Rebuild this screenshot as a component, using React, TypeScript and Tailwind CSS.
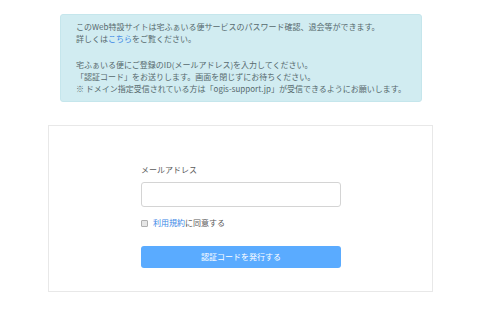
export default function App() {
  const font = { fontFamily: '"Noto Sans CJK JP", "Noto Sans", sans-serif' };
  return (
    <div className="w-[480px] h-[315px] bg-white overflow-hidden" style={font}>
      <div className="pt-[14px] pl-[60px]">
        <div className="w-[362px] h-[88px] bg-[#d1ecf1] border border-[#c5e6ec] rounded-[3px] pl-[15px] pt-[6px] text-[8px] leading-[12px] text-[#56696d]">
          <p>このWeb特設サイトは宅ふぁいる便サービスのパスワード確認、退会等ができます。</p>
          <p>
            詳しくは<span className="text-[#3a86e6]">こちら</span>をご覧ください。
          </p>
          <p className="mt-[14px]">宅ふぁいる便にご登録のID(メールアドレス)を入力してください。</p>
          <p>「認証コード」をお送りします。画面を閉じずにお待ちください。</p>
          <p>
            <span className="text-[#56696d]">※</span> ドメイン指定受信されている方は「ogis-support.jp」が受信できるようにお願いします。
          </p>
        </div>
      </div>
      <div className="mt-[23px] ml-[48px] w-[385px] h-[167px] border border-[#e8e8e8] pl-[92px] pt-[38px]">
        <div className="w-[200px] flex flex-col">
          <label className="text-[8px] leading-[12px] text-[#5a5a5a]">メールアドレス</label>
          <div className="mt-[6px] h-[25px] border border-[#d4d4d4] rounded-[3px] bg-white"></div>
          <div className="mt-[10px] flex items-center h-[12px] text-[8px] leading-[12px] text-[#5a5a5a]">
            <span className="w-[7px] h-[7px] border border-[#b0b0b0] bg-[#e6e6e6] rounded-[1px]"></span>
            <span className="ml-[5px]">
              <span className="text-[#3a86e6]">利用規約</span>に同意する
            </span>
          </div>
          <div className="mt-[17px] h-[22px] rounded-[3px] bg-[#5aabff] flex items-center justify-center text-[8px] text-white">
            認証コードを発行する
          </div>
        </div>
      </div>
    </div>
  );
}
